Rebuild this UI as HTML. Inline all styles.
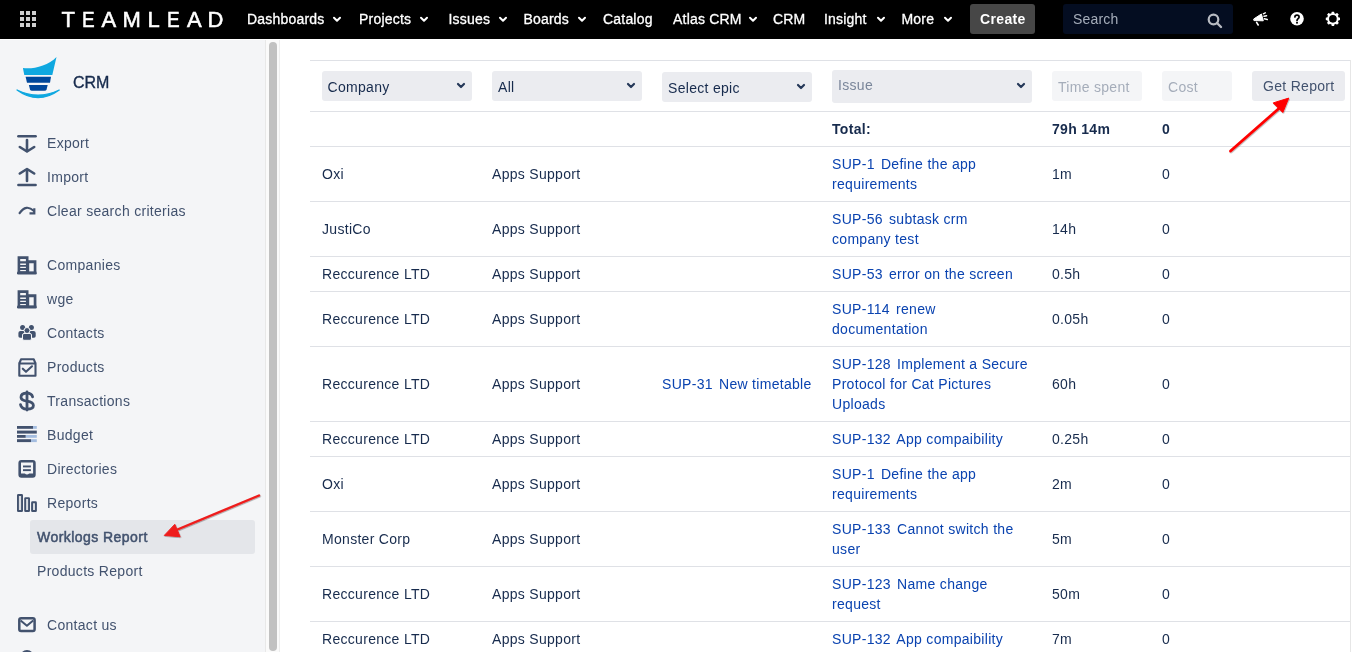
<!DOCTYPE html>
<html><head><meta charset="utf-8">
<style>
*{margin:0;padding:0;box-sizing:border-box;}
html,body{width:1352px;height:652px;overflow:hidden;background:#fff;font-family:"Liberation Sans",sans-serif;font-size:14px;color:#172B4D;}
.abs{position:absolute;}
#hdr{position:absolute;left:0;top:0;width:1352px;height:39px;background:#000;}
#hline{position:absolute;left:0;top:39px;width:1352px;height:1px;background:#fff;}
.nav{position:absolute;top:9px;line-height:20px;color:#fff;font-size:14px;white-space:nowrap;letter-spacing:0.2px;-webkit-text-stroke:0.3px #fff;}
.chev{position:absolute;top:16px;}
.tl{top:7px;font-size:22px;line-height:26px;color:#fff;-webkit-text-stroke:0.55px #fff;}
#side{position:absolute;left:0;top:40px;width:265px;height:612px;background:#F4F5F7;}
#sb1{position:absolute;left:265px;top:40px;width:1px;height:612px;background:#E8E8E8;}
#sbt{position:absolute;left:266px;top:40px;width:13px;height:612px;background:#FAFAFA;}
#sb2{position:absolute;left:279px;top:40px;width:1px;height:612px;background:#EDEDED;}
#thumb{position:absolute;left:269px;top:42px;width:8px;height:609px;background:#C1C1C1;border-radius:4px;}
.si{position:absolute;left:47px;line-height:20px;color:#42526E;white-space:nowrap;letter-spacing:0.3px;}
.ic{position:absolute;left:12px;width:30px;height:30px;}
.row{position:absolute;left:310px;width:1040px;border-top:1px solid #DFE1E6;}
.c{position:absolute;line-height:20px;white-space:nowrap;letter-spacing:0.3px;}
.lnk{color:#0A43B0;}
.k{margin-right:2px;}
.sel{position:absolute;background:#EBECF0;border-radius:3px;}
</style></head><body><div id="wrap" style="position:absolute;left:0;top:0;width:1352px;height:652px;will-change:transform;">
<div id="hdr">
<svg class="abs" style="left:0;top:0" width="60" height="39">
<g fill="#CFCFCF">
<rect x="20" y="11" width="4" height="4"/><rect x="26" y="11" width="4" height="4"/><rect x="32" y="11" width="4" height="4"/>
<rect x="20" y="17" width="4" height="4"/><rect x="26" y="17" width="4" height="4"/><rect x="32" y="17" width="4" height="4"/>
<rect x="20" y="23" width="4" height="4"/><rect x="26" y="23" width="4" height="4"/><rect x="32" y="23" width="4" height="4"/>
</g></svg>
<div class="abs tl" style="left:61.5px">T</div>
<div class="abs tl" style="left:81.5px;transform:scaleX(0.86);transform-origin:0 0">E</div>
<div class="abs tl" style="left:101.5px">A</div>
<div class="abs tl" style="left:122.5px">M</div>
<div class="abs tl" style="left:147.5px">L</div>
<div class="abs tl" style="left:166.5px;transform:scaleX(0.86);transform-origin:0 0">E</div>
<div class="abs tl" style="left:187px">A</div>
<div class="abs tl" style="left:207.5px">D</div>
<div class="nav" style="left:247px">Dashboards</div>
<svg class="chev" style="left:332px" width="10" height="7"><path d="M2 1.8 L5 4.8 L8 1.8" stroke="#fff" stroke-width="2" fill="none" stroke-linecap="round" stroke-linejoin="round"/></svg>
<div class="nav" style="left:359px">Projects</div>
<svg class="chev" style="left:418.5px" width="10" height="7"><path d="M2 1.8 L5 4.8 L8 1.8" stroke="#fff" stroke-width="2" fill="none" stroke-linecap="round" stroke-linejoin="round"/></svg>
<div class="nav" style="left:448.5px">Issues</div>
<svg class="chev" style="left:497.5px" width="10" height="7"><path d="M2 1.8 L5 4.8 L8 1.8" stroke="#fff" stroke-width="2" fill="none" stroke-linecap="round" stroke-linejoin="round"/></svg>
<div class="nav" style="left:523.5px">Boards</div>
<svg class="chev" style="left:576.5px" width="10" height="7"><path d="M2 1.8 L5 4.8 L8 1.8" stroke="#fff" stroke-width="2" fill="none" stroke-linecap="round" stroke-linejoin="round"/></svg>
<div class="nav" style="left:603px">Catalog</div>
<div class="nav" style="left:673px">Atlas CRM</div>
<svg class="chev" style="left:747.5px" width="10" height="7"><path d="M2 1.8 L5 4.8 L8 1.8" stroke="#fff" stroke-width="2" fill="none" stroke-linecap="round" stroke-linejoin="round"/></svg>
<div class="nav" style="left:773px">CRM</div>
<div class="nav" style="left:824px">Insight</div>
<svg class="chev" style="left:875.5px" width="10" height="7"><path d="M2 1.8 L5 4.8 L8 1.8" stroke="#fff" stroke-width="2" fill="none" stroke-linecap="round" stroke-linejoin="round"/></svg>
<div class="nav" style="left:901.5px">More</div>
<svg class="chev" style="left:943px" width="10" height="7"><path d="M2 1.8 L5 4.8 L8 1.8" stroke="#fff" stroke-width="2" fill="none" stroke-linecap="round" stroke-linejoin="round"/></svg>
<div class="abs" style="left:970px;top:4px;width:65px;height:30px;background:#474747;border-radius:3px;"></div>
<div class="nav" style="left:980px;font-weight:bold;-webkit-text-stroke:0;letter-spacing:0.35px">Create</div>
<div class="abs" style="left:1063px;top:4px;width:170px;height:30px;background:#040D21;border-radius:3px;"></div>
<div class="nav" style="left:1073px;color:#A5ADBA;-webkit-text-stroke:0">Search</div>
<svg class="abs" style="left:1205px;top:11px" width="20" height="20"><circle cx="8.5" cy="8.5" r="4.8" stroke="#B8BBC2" stroke-width="2.2" fill="none"/><path d="M12 12 L16 16" stroke="#B8BBC2" stroke-width="2.4" stroke-linecap="round"/></svg>
<svg class="abs" style="left:1248px;top:6px" width="96" height="26">
<g fill="#fff" stroke="#fff" stroke-linejoin="round" stroke-linecap="round">
<path d="M6 12.8 L13.4 8 L15.3 14.8 L6.3 14.6 Z" stroke-width="1"/>
<path d="M8.6 16.4 L10.2 19" stroke-width="1.6"/>
<path d="M15.3 7.8 L17.3 6.8 M16 10.3 L18.6 9.7 M16.3 12.8 L19.3 13.5" stroke-width="1.4" fill="none"/>
</g>
<circle cx="49" cy="12.8" r="6.8" fill="#fff"/>
<path d="M46.9 11 C46.9 8.6 51.1 8.6 51.1 11 C51.1 12.6 49 12.6 49 14.5" stroke="#000" stroke-width="1.7" fill="none" stroke-linecap="round"/>
<rect x="48.1" y="15.9" width="1.8" height="1.7" fill="#000"/>
<g transform="translate(84.9,12.8)" fill="#fff">
<circle r="4.85" fill="none" stroke="#fff" stroke-width="2"/>
<rect x="-1.35" y="-7.1" width="2.7" height="2.6" rx="0.4"/>
<rect x="-1.35" y="-7.1" width="2.7" height="2.6" rx="0.4" transform="rotate(45)"/>
<rect x="-1.35" y="-7.1" width="2.7" height="2.6" rx="0.4" transform="rotate(90)"/>
<rect x="-1.35" y="-7.1" width="2.7" height="2.6" rx="0.4" transform="rotate(135)"/>
<rect x="-1.35" y="-7.1" width="2.7" height="2.6" rx="0.4" transform="rotate(180)"/>
<rect x="-1.35" y="-7.1" width="2.7" height="2.6" rx="0.4" transform="rotate(225)"/>
<rect x="-1.35" y="-7.1" width="2.7" height="2.6" rx="0.4" transform="rotate(270)"/>
<rect x="-1.35" y="-7.1" width="2.7" height="2.6" rx="0.4" transform="rotate(315)"/>
</g>
</svg>
</div>
<div id="hline"></div>

<div id="side"></div>
<svg class="abs" style="left:10px;top:50px" width="60" height="55">
<path d="M12.9 17.9 C22 19.5 38 16 46.5 6.9 L42.3 24.9 L14.3 24.9 Z" fill="#0FA8E0"/>
<path d="M15.6 26.7 L41 26.7 L40 32.7 L17 32.7 Z" fill="#00479B"/>
<path d="M18.9 35 L37.7 35 L36.6 39.5 Q36.2 40.8 34.5 40.8 L22 40.8 Q20.4 40.8 20 39.5 Z" fill="#00479B"/>
<path d="M7 40 Q28 55.4 49.3 40 Q28 50.2 7 40 Z" fill="#0FA8E0" stroke="#0FA8E0" stroke-width="1.2" stroke-linejoin="round"/>
</svg>
<div class="abs" style="left:73px;top:73px;line-height:20px;font-size:16px;color:#172B4D;-webkit-text-stroke:0.35px #172B4D;">CRM</div>

<svg class="abs" style="left:0;top:0;" width="265" height="652">
<g stroke="#42526E" fill="none" stroke-width="2.6" stroke-linecap="round" stroke-linejoin="round">
<!-- export -->
<path d="M18.4 136.3 L35.6 136.3"/>
<path d="M27 140 L27 151"/>
<path d="M19.8 147 L27 151.5 L34.2 147"/>
<!-- import -->
<path d="M18.4 185 L35.6 185"/>
<path d="M27 170 L27 181"/>
<path d="M19.8 173.5 L27 169 L34.2 173.5"/>
</g>
<g stroke="#42526E" fill="none" stroke-width="2.2" stroke-linecap="butt" stroke-linejoin="miter">
<!-- clear -->
<path d="M19.6 213.2 Q26 203.5 34 211" stroke-linecap="round"/>
<path d="M34.3 208.2 L34.3 213.3 L29.5 213.3"/>
</g>
<!-- companies -->
<g fill="#42526E">
<path fill-rule="evenodd" d="M17.6 256.2 L28.5 256.2 L28.5 272 L17.6 272 Z M20.2 258.9 L25.9 258.9 L25.9 261.2 L20.2 261.2 Z M20.2 263.5 L25.9 263.5 L25.9 264.9 L20.2 264.9 Z M20.2 266.7 L25.9 266.7 L25.9 268.1 L20.2 268.1 Z M20.2 270 L25.9 270 L25.9 271.3 L20.2 271.3 Z"/>
<path fill-rule="evenodd" d="M27.6 260.3 L36.4 260.3 L36.4 272 L27.6 272 Z M29.2 263.2 L33.7 263.2 L33.7 271.8 L29.2 271.8 Z"/>
<rect x="17" y="271.5" width="19.8" height="3" rx="1.2"/>
</g>
<!-- wge -->
<g fill="#42526E" transform="translate(0,34)">
<path fill-rule="evenodd" d="M17.6 256.2 L28.5 256.2 L28.5 272 L17.6 272 Z M20.2 258.9 L25.9 258.9 L25.9 261.2 L20.2 261.2 Z M20.2 263.5 L25.9 263.5 L25.9 264.9 L20.2 264.9 Z M20.2 266.7 L25.9 266.7 L25.9 268.1 L20.2 268.1 Z M20.2 270 L25.9 270 L25.9 271.3 L20.2 271.3 Z"/>
<path fill-rule="evenodd" d="M27.6 260.3 L36.4 260.3 L36.4 272 L27.6 272 Z M29.2 263.2 L33.7 263.2 L33.7 271.8 L29.2 271.8 Z"/>
<rect x="17" y="271.5" width="19.8" height="3" rx="1.2"/>
</g>
<!-- contacts -->
<g fill="#42526E">
<circle cx="22.6" cy="327.5" r="2.5"/><circle cx="31.4" cy="327.5" r="2.5"/>
<path d="M18.4 333 Q18.4 331 20.5 331 L24.5 331 L24.5 337.7 L20 337.7 Q18.4 337.7 18.4 336 Z"/>
<path d="M35.7 333 Q35.7 331 33.5 331 L29.5 331 L29.5 337.7 L34 337.7 Q35.7 337.7 35.7 336 Z"/>
<circle cx="27" cy="330.5" r="3" stroke="#F4F5F7" stroke-width="1"/>
<path d="M22.5 335 Q22.5 333.5 24 333.5 L30 333.5 Q31.5 333.5 31.5 335 L31.5 339 Q31.5 340.3 30 340.3 L24 340.3 Q22.5 340.3 22.5 339 Z" stroke="#F4F5F7" stroke-width="1"/>
</g>
<!-- products -->
<g stroke="#42526E" fill="none" stroke-width="2.1" stroke-linejoin="round">
<path d="M19.3 363.5 L19.3 375.8 L35.5 375.8 L35.5 363.5 Z"/>
<path d="M19.3 363.5 L21 359.3 L33.8 359.3 L35.5 363.5"/>
<path d="M22.8 368.7 L26 371.8 L32 366.3" stroke-linecap="round"/>
</g>
<!-- transactions -->
<g stroke="#42526E" stroke-width="2.8" fill="none" stroke-linecap="round"><path d="M32.6 396.8 C31.8 394 29.8 393.2 27 393.2 C23.2 393.2 21 394.8 21 397.2 C21 399.9 23.8 400.7 27 401.2 C31 401.8 33.4 403 33.4 405.6 C33.4 408 31 409.2 27 409.2 C23.5 409.2 21.1 408 20.5 404.6"/><path d="M27 392 L27 410" stroke-linecap="round"/></g>
<!-- budget -->
<g>
<rect x="17" y="426" width="16" height="2.8" fill="#42526E"/><rect x="33" y="426" width="3.8" height="2.8" fill="#A4BDE0"/>
<rect x="17" y="430.6" width="19.8" height="3" fill="#42526E"/>
<rect x="17" y="435" width="8.8" height="2.8" fill="#42526E"/><rect x="25.8" y="435" width="11" height="2.8" fill="#A4BDE0"/>
<rect x="17" y="439.2" width="14" height="2.9" fill="#42526E"/><rect x="31" y="439.2" width="5.8" height="2.9" fill="#A4BDE0"/>
</g>
<!-- directories -->
<g fill="#42526E">
<path fill-rule="evenodd" d="M21.4 460 L32.7 460 Q35.7 460 35.7 463 L35.7 474.7 Q35.7 477.7 32.7 477.7 L21.4 477.7 Q18.4 477.7 18.4 474.7 L18.4 463 Q18.4 460 21.4 460 Z M21 462.6 L21 473.6 L24.8 473.6 Q27 475.6 29.2 473.6 L33.1 473.6 L33.1 462.6 Z"/>
<rect x="23" y="465.5" width="7.9" height="1.9"/>
<rect x="23" y="469.2" width="7.9" height="1.9"/>
</g>
<!-- reports -->
<g stroke="#42526E" fill="#D9DCE1" stroke-width="1.9">
<rect x="17.95" y="494.95" width="4.1" height="16.1" rx="0.4"/>
<rect x="25.15" y="498.15" width="3.9" height="12.9" rx="0.4"/>
<rect x="32.05" y="502.25" width="3.9" height="8.8" rx="0.4"/>
</g>
<!-- contact us -->
<g stroke="#42526E" fill="none" stroke-width="2.1" stroke-linejoin="round">
<rect x="19.3" y="618.3" width="15.3" height="12.7" rx="1.8" stroke-width="2.5"/>
<path d="M20.6 620.4 L26.9 625.8 L33.2 620.4" stroke-width="2"/>
</g>
<circle cx="27" cy="657" r="7" fill="#42526E"/>
</svg>

<div class="si" style="top:133px">Export</div>
<div class="si" style="top:167px">Import</div>
<div class="si" style="top:201px">Clear search criterias</div>
<div class="si" style="top:255px">Companies</div>
<div class="si" style="top:289px">wge</div>
<div class="si" style="top:323px">Contacts</div>
<div class="si" style="top:357px">Products</div>
<div class="si" style="top:391px">Transactions</div>
<div class="si" style="top:425px">Budget</div>
<div class="si" style="top:459px">Directories</div>
<div class="si" style="top:493px">Reports</div>
<div class="abs" style="left:30px;top:520px;width:225px;height:34px;background:#E4E6EA;border-radius:3px;"></div>
<div class="si" style="left:37px;top:527px;-webkit-text-stroke:0.5px #42526E;letter-spacing:0.45px;">Worklogs Report</div>
<div class="si" style="left:37px;top:561px">Products Report</div>
<div class="si" style="top:615px">Contact us</div>
<div id="sb1"></div><div id="sbt"></div><div id="sb2"></div><div id="thumb"></div>

<div class="row" style="top:60px;height:51px;"></div>
<div class="sel" style="left:322px;top:71px;width:150px;height:30px;"></div><div class="c" style="left:327.5px;top:77px;">Company</div><svg class="abs" style="left:456px;top:82px" width="10" height="8"><path d="M2 2 L5 5 L8 2" stroke="#253858" stroke-width="2.2" fill="none" stroke-linecap="round" stroke-linejoin="round"/></svg>
<div class="sel" style="left:492px;top:71px;width:150px;height:30px;"></div><div class="c" style="left:498px;top:77px;">All</div><svg class="abs" style="left:626px;top:82px" width="10" height="8"><path d="M2 2 L5 5 L8 2" stroke="#253858" stroke-width="2.2" fill="none" stroke-linecap="round" stroke-linejoin="round"/></svg>
<div class="sel" style="left:662px;top:72px;width:150px;height:30px;"></div><div class="c" style="left:668px;top:78px;">Select epic</div><svg class="abs" style="left:796px;top:83px" width="10" height="8"><path d="M2 2 L5 5 L8 2" stroke="#253858" stroke-width="2.2" fill="none" stroke-linecap="round" stroke-linejoin="round"/></svg>
<div class="sel" style="left:832px;top:70px;width:200px;height:33px;"></div><div class="c" style="left:838px;top:75px;color:#7A869A;">Issue</div><svg class="abs" style="left:1016px;top:82px" width="10" height="8"><path d="M2 2 L5 5 L8 2" stroke="#253858" stroke-width="2.2" fill="none" stroke-linecap="round" stroke-linejoin="round"/></svg>
<div class="sel" style="left:1052px;top:71px;width:90px;height:30px;background:#F4F5F7;"></div><div class="c" style="left:1058px;top:77px;color:#A5ADBA;">Time spent</div>
<div class="sel" style="left:1162px;top:71px;width:70px;height:30px;background:#F4F5F7;"></div><div class="c" style="left:1168px;top:77px;color:#A5ADBA;">Cost</div>
<div class="sel" style="left:1252px;top:71px;width:93px;height:30px;"></div><div class="c" style="left:1263px;top:76px;color:#42526E;">Get Report</div>
<div class="row" style="top:111px;height:35px;"></div>
<div class="c" style="left:832px;top:119px;font-weight:bold;">Total:</div>
<div class="c" style="left:1052px;top:119px;font-weight:bold;">79h 14m</div>
<div class="c" style="left:1162px;top:119px;font-weight:bold;">0</div>
<div class="row" style="top:146px;height:55px;"></div>
<div class="c" style="left:322px;top:164.0px;">Oxi</div>
<div class="c" style="left:492px;top:164.0px;">Apps Support</div>
<div class="c lnk" style="left:832px;top:154px;"><span class="k">SUP-1</span> Define the app<br>requirements</div>
<div class="c" style="left:1052px;top:164.0px;">1m</div>
<div class="c" style="left:1162px;top:164.0px;">0</div>
<div class="row" style="top:201px;height:55px;"></div>
<div class="c" style="left:322px;top:219.0px;">JustiCo</div>
<div class="c" style="left:492px;top:219.0px;">Apps Support</div>
<div class="c lnk" style="left:832px;top:209px;"><span class="k">SUP-56</span> subtask crm<br>company test</div>
<div class="c" style="left:1052px;top:219.0px;">14h</div>
<div class="c" style="left:1162px;top:219.0px;">0</div>
<div class="row" style="top:256px;height:35px;"></div>
<div class="c" style="left:322px;top:264.0px;">Reccurence LTD</div>
<div class="c" style="left:492px;top:264.0px;">Apps Support</div>
<div class="c lnk" style="left:832px;top:264px;"><span class="k">SUP-53</span> error on the screen</div>
<div class="c" style="left:1052px;top:264.0px;">0.5h</div>
<div class="c" style="left:1162px;top:264.0px;">0</div>
<div class="row" style="top:291px;height:55px;"></div>
<div class="c" style="left:322px;top:309.0px;">Reccurence LTD</div>
<div class="c" style="left:492px;top:309.0px;">Apps Support</div>
<div class="c lnk" style="left:832px;top:299px;"><span class="k">SUP-114</span> renew<br>documentation</div>
<div class="c" style="left:1052px;top:309.0px;">0.05h</div>
<div class="c" style="left:1162px;top:309.0px;">0</div>
<div class="row" style="top:346px;height:75px;"></div>
<div class="c" style="left:322px;top:374.0px;">Reccurence LTD</div>
<div class="c" style="left:492px;top:374.0px;">Apps Support</div>
<div class="c lnk" style="left:662px;top:374.0px;"><span class="k">SUP-31</span> New timetable</div>
<div class="c lnk" style="left:832px;top:354px;"><span class="k">SUP-128</span> Implement a Secure<br>Protocol for Cat Pictures<br>Uploads</div>
<div class="c" style="left:1052px;top:374.0px;">60h</div>
<div class="c" style="left:1162px;top:374.0px;">0</div>
<div class="row" style="top:421px;height:35px;"></div>
<div class="c" style="left:322px;top:429.0px;">Reccurence LTD</div>
<div class="c" style="left:492px;top:429.0px;">Apps Support</div>
<div class="c lnk" style="left:832px;top:429px;"><span class="k">SUP-132</span> App compaibility</div>
<div class="c" style="left:1052px;top:429.0px;">0.25h</div>
<div class="c" style="left:1162px;top:429.0px;">0</div>
<div class="row" style="top:456px;height:55px;"></div>
<div class="c" style="left:322px;top:474.0px;">Oxi</div>
<div class="c" style="left:492px;top:474.0px;">Apps Support</div>
<div class="c lnk" style="left:832px;top:464px;"><span class="k">SUP-1</span> Define the app<br>requirements</div>
<div class="c" style="left:1052px;top:474.0px;">2m</div>
<div class="c" style="left:1162px;top:474.0px;">0</div>
<div class="row" style="top:511px;height:55px;"></div>
<div class="c" style="left:322px;top:529.0px;">Monster Corp</div>
<div class="c" style="left:492px;top:529.0px;">Apps Support</div>
<div class="c lnk" style="left:832px;top:519px;"><span class="k">SUP-133</span> Cannot switch the<br>user</div>
<div class="c" style="left:1052px;top:529.0px;">5m</div>
<div class="c" style="left:1162px;top:529.0px;">0</div>
<div class="row" style="top:566px;height:55px;"></div>
<div class="c" style="left:322px;top:584.0px;">Reccurence LTD</div>
<div class="c" style="left:492px;top:584.0px;">Apps Support</div>
<div class="c lnk" style="left:832px;top:574px;"><span class="k">SUP-123</span> Name change<br>request</div>
<div class="c" style="left:1052px;top:584.0px;">50m</div>
<div class="c" style="left:1162px;top:584.0px;">0</div>
<div class="row" style="top:621px;height:31px;"></div>
<div class="c" style="left:322px;top:629.0px;">Reccurence LTD</div>
<div class="c" style="left:492px;top:629.0px;">Apps Support</div>
<div class="c lnk" style="left:832px;top:629px;"><span class="k">SUP-132</span> App compaibility</div>
<div class="c" style="left:1052px;top:629.0px;">7m</div>
<div class="c" style="left:1162px;top:629.0px;">0</div>
<div class="abs" style="left:1350px;top:60px;width:1px;height:592px;background:#E6E6E6;"></div>
<svg class="abs" style="left:0;top:0;" width="1352" height="652">
<defs><filter id="sh" x="-20%" y="-20%" width="140%" height="140%"><feDropShadow dx="0.6" dy="0.8" stdDeviation="0.7" flood-color="#000" flood-opacity="0.35"/></filter></defs>
<g filter="url(#sh)">
<path d="M1230.5 151 L1280 107.5" stroke="#FF0000" stroke-width="2.8" stroke-linecap="round"/>
<path d="M1288.7 98.1 L1273.2 102.9 L1282.8 112.5 Z" fill="#FF0000" stroke="#FF0000" stroke-width="1" stroke-linejoin="round"/>
<path d="M259 495.5 L175 530.5" stroke="#EE1C1C" stroke-width="2.4" stroke-linecap="round"/>
<path d="M164.3 535.4 L174.8 524.3 L180.1 536.7 Z" fill="#EE1C1C" stroke="#EE1C1C" stroke-width="1" stroke-linejoin="round"/>
</g></svg>
</div></body></html>
